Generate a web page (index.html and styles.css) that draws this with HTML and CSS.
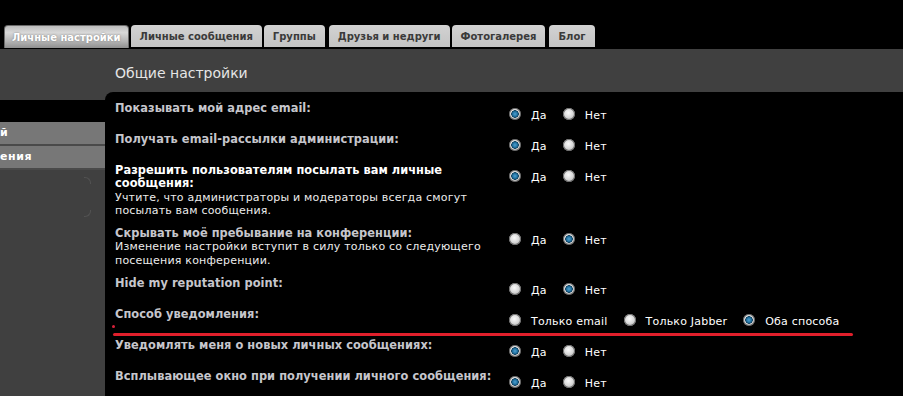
FILE: index.html
```html
<!DOCTYPE html>
<html lang="ru">
<head>
<meta charset="utf-8">
<title>Общие настройки</title>
<link rel="stylesheet" href="styles.css">
</head>
<body>
<div class="tabs">
  <div class="tab active">Личные настройки</div>
  <div class="tab">Личные сообщения</div>
  <div class="tab">Группы</div>
  <div class="tab wide-gap">Друзья и недруги</div>
  <div class="tab">Фотогалерея</div>
  <div class="tab wide-gap">Блог</div>
</div>
<div class="main">
  <div class="sidebar">
    <div class="side-head"></div>
    <div class="side-item">й</div>
    <div class="side-item">ения</div>
    <span class="side-tick t1"></span>
    <span class="side-tick t2"></span>
  </div>
  <div class="content">
    <h2 class="title">Общие настройки</h2>
    <div class="panel">
      <div class="row">
        <div class="label">Показывать мой адрес email:</div>
        <div class="opts"><span class="radio on"></span><span class="opt">Да</span><span class="radio"></span><span class="opt">Нет</span></div>
      </div>
      <div class="row">
        <div class="label">Получать email-рассылки администрации:</div>
        <div class="opts"><span class="radio on"></span><span class="opt">Да</span><span class="radio"></span><span class="opt">Нет</span></div>
      </div>
      <div class="row">
        <div class="label"><b class="hl">Разрешить пользователям посылать вам личные сообщения:</b><span class="desc">Учтите, что администраторы и модераторы всегда смогут посылать вам сообщения.</span></div>
        <div class="opts"><span class="radio on"></span><span class="opt">Да</span><span class="radio"></span><span class="opt">Нет</span></div>
      </div>
      <div class="row">
        <div class="label">Скрывать моё пребывание на конференции:<span class="desc">Изменение настройки вступит в силу только со следующего посещения конференции.</span></div>
        <div class="opts"><span class="radio"></span><span class="opt">Да</span><span class="radio on"></span><span class="opt">Нет</span></div>
      </div>
      <div class="row">
        <div class="label">Hide my reputation point:</div>
        <div class="opts"><span class="radio"></span><span class="opt">Да</span><span class="radio on"></span><span class="opt">Нет</span></div>
      </div>
      <div class="row marked">
        <div class="label">Способ уведомления:</div>
        <div class="opts"><span class="radio"></span><span class="opt">Только email</span><span class="radio"></span><span class="opt">Только Jabber</span><span class="radio on"></span><span class="opt">Оба способа</span></div>
        <span class="mark-dot"></span>
        <span class="mark-line"></span>
      </div>
      <div class="row">
        <div class="label">Уведомлять меня о новых личных сообщениях:</div>
        <div class="opts"><span class="radio on"></span><span class="opt">Да</span><span class="radio"></span><span class="opt">Нет</span></div>
      </div>
      <div class="row">
        <div class="label">Всплывающее окно при получении личного сообщения:</div>
        <div class="opts"><span class="radio on"></span><span class="opt">Да</span><span class="radio"></span><span class="opt">Нет</span></div>
      </div>
    </div>
  </div>
</div>
</body>
</html>
```
FILE: styles.css
```css
html, body {
  margin: 0;
  padding: 0;
  background: #000;
  height: 100%;
  overflow: hidden;
}
body {
  font-family: "DejaVu Sans", Verdana, sans-serif;
  font-size: 11px;
  color: #fff;
}
.tabs {
  display: flex;
  gap: 2px;
  padding: 25px 0 0 4px;
  height: 23px;
  box-sizing: content-box;
  border-bottom: 1px solid #000;
}
.tab {
  height: 22px;
  line-height: 23px;
  padding: 0 9px;
  font-weight: bold;
  font-size: 10px;
  color: #3a3a3a;
  background: linear-gradient(#d2d2d2, #c4c4c4);
  border-radius: 4px 4px 0 0;
}
.tab.wide-gap {
  margin-left: 2px;
}
.tab.active {
  color: #fff;
  padding: 0 7px;
  text-shadow: 0 0 2px #777;
  background: linear-gradient(#bdbdbd, #d8d8d8 30%, #b4b4b4 70%, #8f8f8f);
  border: 1px solid #6a6a6a;
  border-bottom: 0;
  height: 22px;
}
.main {
  display: grid;
  grid-template-columns: 105px 1fr;
  background: #404040;
  min-height: 400px;
}
.sidebar {
  padding-top: 51px;
  position: relative;
}
.side-head {
  height: 22px;
  background: #000;
}
.side-item {
  height: 22px;
  line-height: 22px;
  background: #777;
  color: #fff;
  font-weight: bold;
  letter-spacing: 0.6px;
  white-space: nowrap;
  border-bottom: 2px solid #4a4a4a;
}
.side-item:last-child {
  border-bottom: 0;
}
.side-tick {
  position: absolute;
  left: 84px;
  width: 6px;
  height: 6px;
  border-top: 1px solid #5e5e5e;
  border-right: 1px solid #5e5e5e;
  border-radius: 0 6px 0 0;
  opacity: 0.6;
}
.side-tick.t1 { top: 128px; }
.side-tick.t2 { top: 161px; transform: rotate(90deg); }
.title {
  margin: 0;
  padding: 16px 0 0 10px;
  height: 27px;
  font-size: 14px;
  font-weight: normal;
  color: #e6e6e6;
}
.panel {
  background: #000;
  border-top-left-radius: 8px;
  padding: 10px 0 0 10px;
  min-height: 320px;
}
.row {
  display: flex;
  align-items: flex-start;
  padding-bottom: 10px;
  position: relative;
}
.label {
  width: 393px;
  flex: none;
  font-weight: bold;
  font-size: 11.4px;
  letter-spacing: 0.05px;
  line-height: 13.3px;
  color: #c6c6cc;
}
.hl {
  color: #fff;
}
.desc {
  display: block;
  font-weight: normal;
  font-size: 11px;
  letter-spacing: 0.2px;
  color: #ececec;
}
.opts {
  display: flex;
  align-items: center;
  margin-top: 6px;
  height: 15px;
  white-space: nowrap;
}
.radio {
  width: 12px;
  height: 12px;
  border-radius: 50%;
  margin: 0 10px 3px 1px;
  background: radial-gradient(circle at 45% 40%, #fafafa 0, #d9d9d9 45%, #9a9a9a 100%);
  box-shadow: 0 0 0 1px #6a6a6a inset;
}
.radio.on {
  background:
    radial-gradient(circle at 50% 50%, #4d9fd0 0, #1f6f9e 2.5px, #0d3e5c 3.5px, transparent 4px),
    radial-gradient(circle at 45% 40%, #fafafa 0, #d6d6d6 50%, #8e8e8e 100%);
}
.opt {
  margin-right: 15px;
  letter-spacing: 0.2px;
  color: #fff;
}
.mark-dot {
  position: absolute;
  left: -3px;
  top: 17px;
  width: 3px;
  height: 3px;
  border-radius: 50%;
  background: #d8213a;
}
.mark-line {
  position: absolute;
  left: -2px;
  top: 25px;
  width: 740px;
  height: 3px;
  border-radius: 2px;
  background: #e01f2b;
}
```
